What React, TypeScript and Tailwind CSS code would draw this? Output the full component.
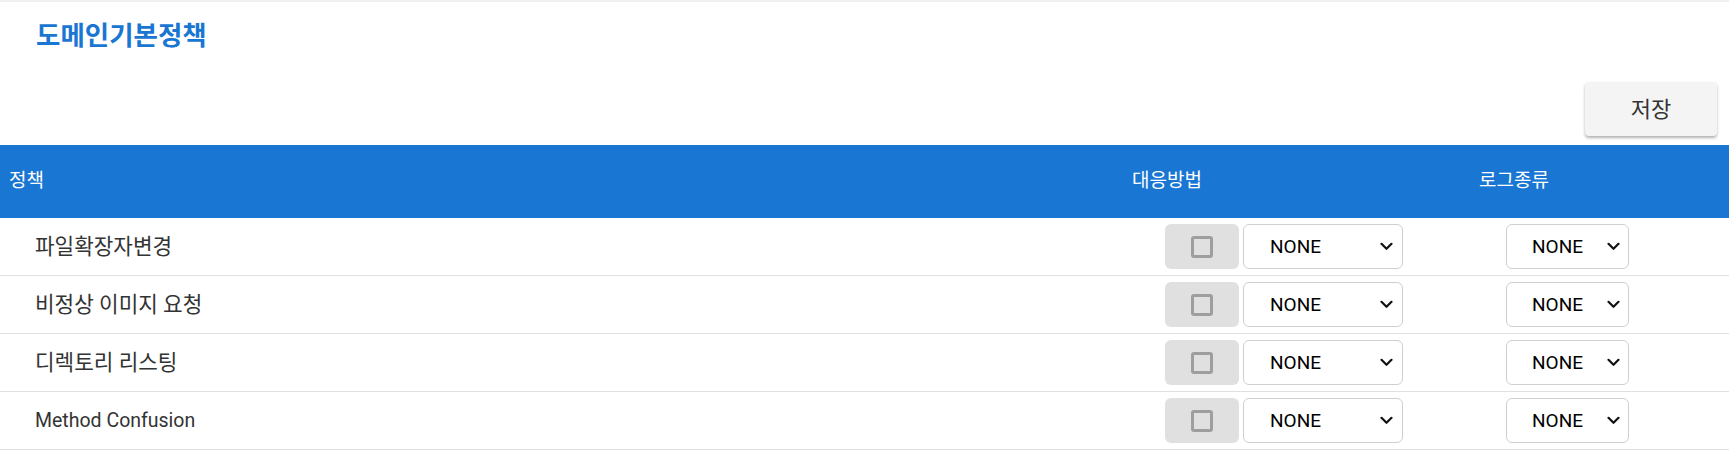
import React from "react";

const rows = [
  { t: "파일확장자변경", c: "text-[21.3px]" },
  { t: "비정상 이미지 요청", c: "text-[21.3px]" },
  { t: "디렉토리 리스팅", c: "text-[21.3px]" },
  { t: "Method Confusion", c: "text-[19.5px]" },
];

const kr = { fontFamily: 'Roboto, "Noto Sans CJK KR", sans-serif' };

function Chevron() {
  return (
    <svg width="13" height="9" viewBox="0 0 13 9" fill="none">
      <path d="M1.5 1.8 L6.5 6.8 L11.5 1.8" stroke="#111" strokeWidth="2.2" strokeLinecap="round" strokeLinejoin="round" />
    </svg>
  );
}

function Select({ w, pl, pr }: { w: string; pl: string; pr: string }) {
  return (
    <div
      className={`${w} ${pl} ${pr} h-[45px] flex items-center justify-between border border-[#cfcfcf] rounded-[6px] bg-white text-[19px] text-black`}
    >
      <span className="pt-[2px]">NONE</span>
      <Chevron />
    </div>
  );
}

export default function App() {
  return (
    <div className="w-[1729px] h-[454px] bg-white overflow-hidden" style={kr}>
      <div className="h-[2px] bg-[#f0f0f0]" />
      <div className="pt-[18px] pl-[36px] text-[26.5px] leading-[32px] font-bold text-[#1976d2]">도메인기본정책</div>
      <div className="flex justify-end pr-[12px] mt-[30px] mb-[9px]">
        <button className="w-[132px] h-[54px] bg-[#f4f4f4] rounded-[4px] shadow-[0_2px_3px_rgba(0,0,0,0.3)] text-[22px] text-[#333]">
          저장
        </button>
      </div>
      <div className="h-[73px] bg-[#1976d2] flex items-center text-white text-[19px]">
        <div className="flex-1 pl-[9px]">정책</div>
        <div className="w-[347px]">대응방법</div>
        <div className="w-[250px]">로그종류</div>
      </div>
      {rows.map((r) => (
        <div key={r.t} className="h-[58px] border-b border-[#e0e0e0] flex items-center">
          <div className={`flex-1 pl-[35px] text-[#333] ${r.c}`}>{r.t}</div>
          <div className="w-[347px] pl-[33px] flex items-center gap-[4px]">
            <div className="w-[74px] h-[45px] bg-[#e0e0e0] rounded-[6px] flex items-center justify-center">
              <div className="w-[22px] h-[22px] border-[3px] border-[#9e9e9e] rounded-[3px]" />
            </div>
            <Select w="w-[160px]" pl="pl-[26px]" pr="pr-[9px]" />
          </div>
          <div className="w-[250px] pl-[27px]">
            <Select w="w-[123px]" pl="pl-[25px]" pr="pr-[8px]" />
          </div>
        </div>
      ))}
    </div>
  );
}
